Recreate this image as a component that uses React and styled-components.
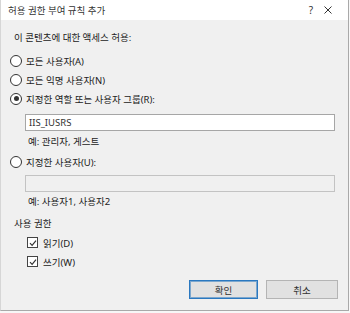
import React from "react";
import styled, { createGlobalStyle } from "styled-components";

const Global = createGlobalStyle`
  html, body { margin: 0; padding: 0; background: #f7f7f7; }
  body { font-family: "Noto Sans", "Noto Sans CJK KR", sans-serif; }
  #root { width: 350px; height: 313px; }
`;

const Dialog = styled.div`
  width: 347px;
  height: 310px;
  border-right: 1px solid #a9a9a9;
  border-bottom: 1px solid #a9a9a9;
  border-left: 1px solid #d6d6d6;
  box-sizing: content-box;
  display: flex;
  flex-direction: column;
  background: #f0f0f0;
  color: #222;
  font-size: 9.5px;
  font-family: "Noto Sans", "Noto Sans CJK KR", sans-serif;
`;

const TitleBar = styled.div`
  height: 20px;
  flex: none;
  background: #ffffff;
  display: flex;
  align-items: center;
  padding-left: 7px;
  color: #333;
  font-size: 9.5px;
`;

const Title = styled.div`
  flex: 1;
`;

const TitleButton = styled.div`
  width: ${(p) => p.$w}px;
  display: flex;
  justify-content: center;
  align-items: center;
  color: #333;
  font-size: 10px;
`;

const Body = styled.div`
  flex: 1;
  display: flex;
  flex-direction: column;
  padding: 0 12px 0 12px;
`;

const Label = styled.div`
  height: 18px;
  display: flex;
  align-items: center;
  margin-top: ${(p) => p.$mt}px;
  padding-left: ${(p) => p.$indent || 0}px;
`;

const OptionRow = styled.label`
  height: 19px;
  display: flex;
  align-items: center;
  gap: 4px;
  margin-top: ${(p) => p.$mt || 0}px;
  padding-left: ${(p) => p.$indent || 0}px;
`;

const RadioCircle = styled.span`
  width: 10px;
  height: 10px;
  border: 1px solid #333;
  border-radius: 50%;
  background: #fff;
  display: flex;
  align-items: center;
  justify-content: center;
  flex: none;
  margin-left: -3px;
  &::after {
    content: "";
    width: 5px;
    height: 5px;
    border-radius: 50%;
    background: ${(p) => (p.$checked ? "#333" : "transparent")};
  }
`;

const CheckBox = styled.span`
  width: 9px;
  height: 9px;
  border: 1px solid #444;
  background: #fff;
  display: flex;
  align-items: center;
  justify-content: center;
  flex: none;
  margin-right: 1px;
`;

const TextInput = styled.div`
  height: 17px;
  box-sizing: border-box;
  margin-top: ${(p) => p.$mt}px;
  margin-left: 12px;
  margin-right: 1px;
  border: 1px solid ${(p) => (p.$disabled ? "#c3c3c3" : "#a6a6a6")};
  background: ${(p) => (p.$disabled ? "#f0f0f0" : "#ffffff")};
  display: flex;
  align-items: center;
  padding-left: 3px;
  color: #333;
`;

const ButtonRow = styled.div`
  display: flex;
  justify-content: flex-end;
  gap: 8px;
  margin-top: 9px;
  margin-right: -2px;
`;

const Button = styled.div`
  width: ${(p) => p.$w}px;
  height: 19px;
  box-sizing: border-box;
  background: #e1e1e1;
  border: 1px solid ${(p) => (p.$default ? "#2a78c0" : "#b4b4b4")};
  box-shadow: ${(p) => (p.$default ? "inset 0 0 0 1px rgba(42,120,192,0.55)" : "none")};
  display: flex;
  align-items: center;
  justify-content: center;
  color: #333;
`;

const Check = () => (
  <svg width="8" height="8" viewBox="0 0 8 8">
    <path d="M1 4.2 L3.1 6.3 L7 1.6" fill="none" stroke="#333" strokeWidth="1.2" />
  </svg>
);

const Close = () => (
  <svg width="8" height="8" viewBox="0 0 8 8">
    <path d="M0.5 0.5 L7.5 7.5 M7.5 0.5 L0.5 7.5" stroke="#333" strokeWidth="1" />
  </svg>
);

export default function App() {
  return (
    <>
      <Global />
      <Dialog>
        <TitleBar>
          <Title>허용 권한 부여 규칙 추가</Title>
          <TitleButton $w={14}>?</TitleButton>
          <TitleButton $w={20}>
            <Close />
          </TitleButton>
          <TitleButton $w={10} />
        </TitleBar>
        <Body>
          <Label $mt={8} $indent={1}>이 콘텐츠에 대한 액세스 허용:</Label>
          <OptionRow $mt={5}>
            <RadioCircle />
            모든 사용자(A)
          </OptionRow>
          <OptionRow>
            <RadioCircle />
            모든 익명 사용자(N)
          </OptionRow>
          <OptionRow>
            <RadioCircle $checked />
            지정한 역할 또는 사용자 그룹(R):
          </OptionRow>
          <TextInput $mt={6}>IIS_IUSRS</TextInput>
          <Label $mt={1} $indent={15}>예: 관리자, 게스트</Label>
          <OptionRow $mt={2}>
            <RadioCircle />
            지정한 사용자(U):
          </OptionRow>
          <TextInput $mt={4} $disabled />
          <Label $mt={0} $indent={15}>예: 사용자1, 사용자2</Label>
          <Label $mt={4} $indent={1}>사용 권한</Label>
          <OptionRow $mt={1} $indent={14}>
            <CheckBox>
              <Check />
            </CheckBox>
            읽기(D)
          </OptionRow>
          <OptionRow $indent={14}>
            <CheckBox>
              <Check />
            </CheckBox>
            쓰기(W)
          </OptionRow>
          <ButtonRow>
            <Button $w={69} $default>확인</Button>
            <Button $w={72}>취소</Button>
          </ButtonRow>
        </Body>
      </Dialog>
    </>
  );
}
